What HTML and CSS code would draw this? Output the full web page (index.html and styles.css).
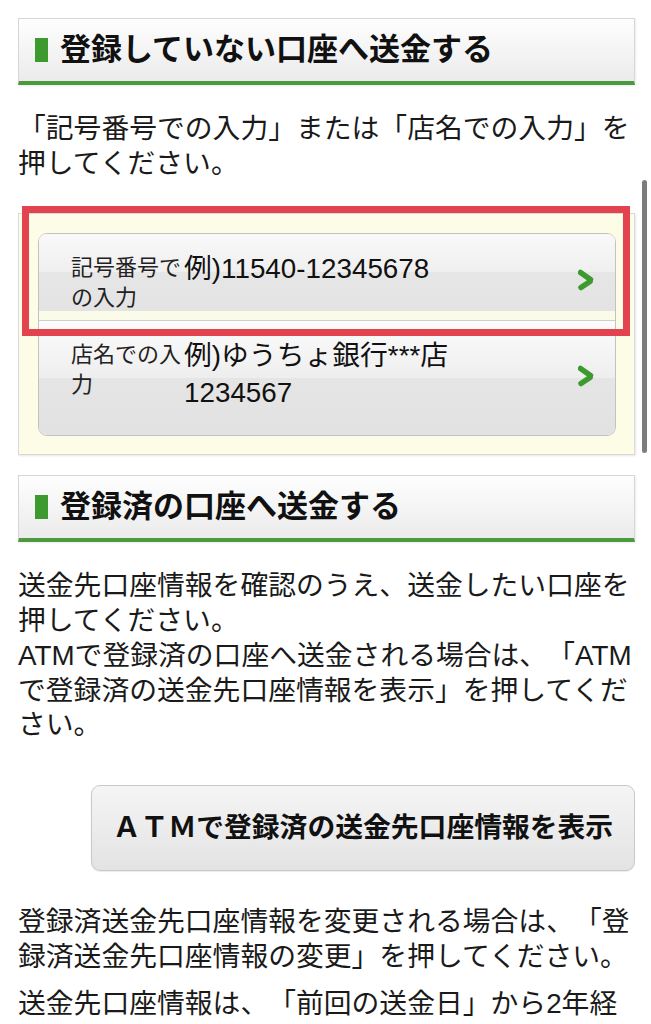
FILE: index.html
```html
<!DOCTYPE html>
<html lang="ja">
<head>
    <meta charset="UTF-8">
    <meta name="viewport" content="width=device-width, initial-scale=1.0">
    <title>送金 - 送金先の選択</title>
    <link rel="stylesheet" href="styles.css">
</head>
<body>
    <div class="page">
        <h2 class="sec-title">登録していない口座へ送金する</h2>
        <p class="note">「記号番号での入力」または「店名での入力」を押してください。</p>

        <div class="select-box">
            <ul class="choice-list">
                <li class="choice choice-first">
                    <span class="choice-label">記号番号での入力</span>
                    <span class="choice-value">例)11540-12345678</span>
                    <svg class="chevron" width="16" height="22" viewBox="0 0 16 22"><path d="M2.5 3.5 L12.5 10.5" stroke="#3d9a2f" stroke-width="5.5" stroke-linecap="round"/><path d="M12 12.5 L3 18.5" stroke="#3d9a2f" stroke-width="5.5" stroke-linecap="round"/></svg>
                </li>
                <li class="choice choice-second">
                    <span class="choice-label">店名での入力</span>
                    <span class="choice-value">例)ゆうちょ銀行***店<br>1234567</span>
                    <svg class="chevron" width="16" height="22" viewBox="0 0 16 22"><path d="M2.5 3.5 L12.5 10.5" stroke="#3d9a2f" stroke-width="5.5" stroke-linecap="round"/><path d="M12 12.5 L3 18.5" stroke="#3d9a2f" stroke-width="5.5" stroke-linecap="round"/></svg>
                </li>
            </ul>
            <div class="highlight"></div>
        </div>

        <h2 class="sec-title sec-title-2">登録済の口座へ送金する</h2>
        <p class="note">送金先口座情報を確認のうえ、送金したい口座を押してください。<br>ATMで登録済の口座へ送金される場合は、「ATMで登録済の送金先口座情報を表示」を押してください。</p>

        <div class="btn-row">
            <button type="button" class="btn-atm">ＡＴＭで登録済の送金先口座情報を表示</button>
        </div>

        <p class="note note-after">登録済送金先口座情報を変更される場合は、「登録済送金先口座情報の変更」を押してください。</p>
        <p class="note note-last">送金先口座情報は、「前回の送金日」から2年経</p>
    </div>

    <div class="scroll-bar"></div>
</body>
</html>
```

FILE: styles.css
```css
body {
    margin: 0;
    padding: 0;
    background-color: #fff;
    color: #1a1a1a;
    font-family: "Liberation Sans", "Noto Sans CJK JP", sans-serif;
    text-spacing-trim: space-all;
}

.page {
    padding: 18px 16px 0 18px;
}

/* 見出し */
.sec-title {
    margin: 0;
    padding: 13px 0 13px 16px;
    background: linear-gradient(#fefefe, #ebebeb);
    border: 1px solid #d6d6d6;
    border-bottom: 4px solid #4c9a3d;
    box-shadow: 1px 1px 2px rgba(0, 0, 0, 0.08);
    font-size: 31px;
    line-height: 36px;
    font-weight: bold;
    color: #111;
    display: flex;
    align-items: center;
}

.sec-title::before {
    content: "";
    display: inline-block;
    width: 13px;
    height: 24px;
    margin-right: 12px;
    background-color: #3d9a2f;
}

.sec-title-2 {
    margin-top: 20px;
}

.note {
    margin: 27px 0 0;
    font-size: 27.8px;
    line-height: 34.7px;
}

/* 入力方法の選択 */
.select-box {
    position: relative;
    margin-top: 32px;
    padding: 19px 18px 18px 19px;
    background-color: #fdfde7;
    border: 1px solid #d9d9d9;
    box-shadow: 1px 1px 2px rgba(0, 0, 0, 0.1);
}

.choice-list {
    list-style: none;
    margin: 0;
    padding: 0;
    border: 1px solid #c2c2c2;
    border-radius: 9px;
    overflow: hidden;
}

.choice {
    display: flex;
    align-items: flex-start;
    padding: 19px 21px 0 32px;
}

.choice-first {
    padding-bottom: 7px;
    background: #fbfbea linear-gradient(#f9f9f9, #efefef 50%, #e6e6e6 50%, #e3e3e3) no-repeat top / 100% 77px;
    border-bottom: 1px solid #cfcfcf;
}

.choice-second {
    padding-bottom: 24px;
    background: linear-gradient(#fcfcfc, #eeeeee 50%, #e5e5e5 50%, #e2e2e2);
}

.choice-label {
    flex: 0 0 113px;
    font-size: 22px;
    line-height: 30px;
    color: #222;
}

.choice-value {
    font-size: 27.8px;
    line-height: 37px;
    margin-top: -3px;
    color: #111;
}

.chevron {
    margin-left: auto;
    align-self: center;
}

.choice-first .chevron {
    margin-bottom: 6px;
}

/* 注釈用の赤枠 */
.highlight {
    position: absolute;
    left: 3px;
    top: -8px;
    width: 594px;
    height: 116px;
    border: 7px solid #e2434e;
}

/* ATMボタン */
.btn-row {
    display: flex;
    justify-content: flex-end;
    margin-top: 42px;
}

.btn-atm {
    width: 544px;
    padding: 24px 0;
    background: linear-gradient(#f5f5f5, #e3e3e3);
    border: 1px solid #c9c9c9;
    border-radius: 9px;
    box-shadow: 0 1px 1px rgba(0, 0, 0, 0.08);
    font-family: "Liberation Sans", "Noto Sans CJK JP", sans-serif;
    font-size: 27.8px;
    line-height: 36px;
    font-weight: bold;
    color: #111;
    cursor: pointer;
}

.note-after {
    margin-top: 34px;
}

.note-last {
    margin-top: 13px;
}

.scroll-bar {
    position: absolute;
    top: 180px;
    right: 4px;
    width: 5px;
    height: 273px;
    border-radius: 3px;
    background-color: #7d7d7d;
}
```
